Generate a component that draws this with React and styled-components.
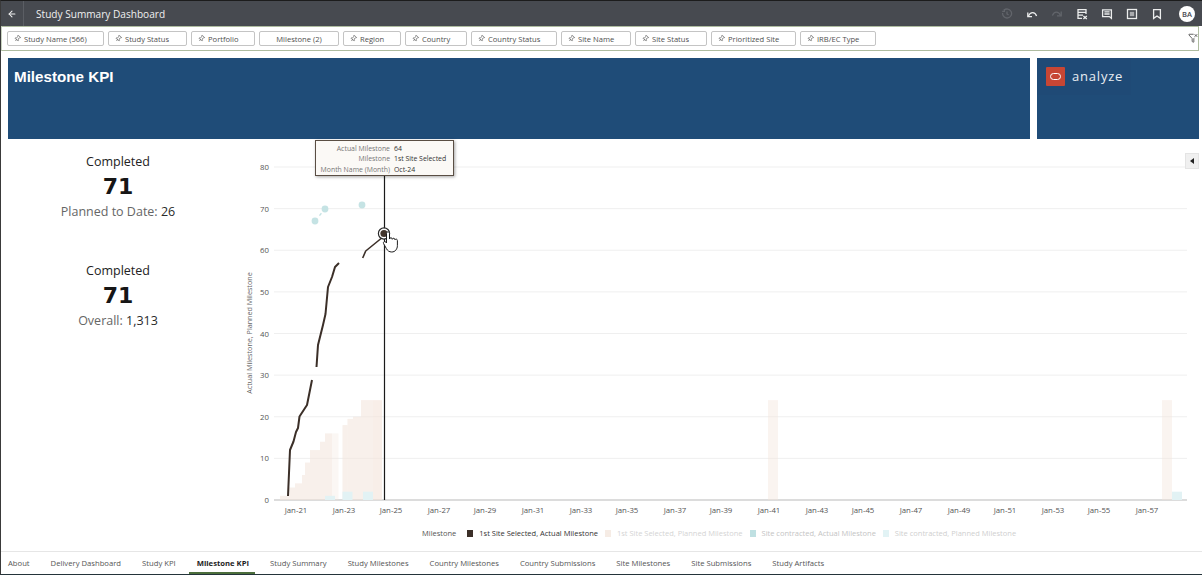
import React from "react";
import styled, { createGlobalStyle } from "styled-components";
import { ArrowLeft, Pin, FilterX } from "lucide-react";

const Global = createGlobalStyle`
  html, body { margin: 0; padding: 0; background: #fff; overflow: hidden; }
  * { box-sizing: border-box; }
  body { font-family: "Open Sans", "Noto Sans", sans-serif; }
`;

const Page = styled.div`
  width: 1202px; height: 575px; display: flex; flex-direction: column;
  border-top: 1px solid #1c1c1c; border-left: 1px solid #3a3a3a; border-bottom: 1px solid #24343a;
  overflow: hidden; position: relative;
`;
const Header = styled.header`
  height: 25px; flex: none; background: #474a50; display: flex; align-items: center; color: #fff;
`;
const BackCell = styled.div`
  width: 23px; height: 100%; display: flex; align-items: center; justify-content: center;
  border-right: 1px solid #5b5e64; color: #f2f2f2;
`;
const Title = styled.div`
  margin-left: 12px; font-size: 10.1px; color: #f0f0f0; flex: 1;
`;
const IconRow = styled.div`
  display: flex; align-items: center; gap: 13px; padding-right: 7px;
`;
const HeadIcon = styled.svg`
  width: 12px; height: 12px; display: block; fill: none; stroke: currentColor; stroke-width: 1.3;
  color: ${p => (p.$off ? "#62656b" : "#eceded")};
`;
const Avatar = styled.div`
  width: 16px; height: 16px; border-radius: 50%; background: #fff; color: #474a50;
  font-size: 7.5px; font-weight: 600; display: flex; align-items: center; justify-content: center; margin-left: 3px;
`;
const FilterBar = styled.div`
  height: 25px; flex: none; margin-right: 3px; border: 1px solid #aebca0; border-left-color: #c9d3c0;
  display: flex; align-items: center; gap: 4px; padding-left: 5px; position: relative; background: #fff;
`;
const Chip = styled.div`
  width: ${p => p.$w}px; height: 15px; border: 1px solid #c4c4c4; border-radius: 2px; flex: none;
  display: flex; align-items: center; justify-content: ${p => (p.$center ? "center" : "flex-start")};
  padding-left: ${p => (p.$center ? 0 : 6)}px; gap: 3px; font-size: 7.6px; color: #4f4f4f; white-space: nowrap;
`;
const ChipPin = styled(Pin)`
  transform: rotate(40deg); flex: none;
`;
const FilterIcon = styled.span`
  position: absolute; right: 0; top: 6px; color: #333; display: flex;
`;
const Banners = styled.div`
  display: flex; gap: 7px; padding: 7px 3px 0 7px; flex: none;
`;
const MainBanner = styled.div`
  flex: 1; height: 81px; background: #1f4c78; color: #fff; padding: 10px 6px;
  font-family: "Liberation Sans", Arial, sans-serif; font-weight: 700; font-size: 15.2px; line-height: 18px;
`;
const LogoBanner = styled.div`
  width: 162px; height: 81px; background: #1f4c78; flex: none;
`;
const LogoPlate = styled.div`
  width: 94px; height: 37px; background: #1f4a76; display: flex; align-items: flex-start; gap: 7px; padding: 9px 0 0 9px;
`;
const LogoMark = styled.div`
  width: 19px; height: 19px; background: #c74634; border-radius: 1px; display: flex; align-items: center; justify-content: center;
`;
const LogoRing = styled.div`
  width: 11px; height: 7px; border: 1.5px solid #fff; border-radius: 4px;
`;
const LogoText = styled.div`
  color: #e8edf2; font-size: 13px; letter-spacing: 0.8px; line-height: 19px;
`;
const Body = styled.div`
  flex: 1; min-height: 0; display: flex; position: relative;
`;
const Stats = styled.div`
  width: 239px; flex: none; display: flex; flex-direction: column; gap: 30px; padding-top: 14px;
`;
const Stat = styled.div`
  width: 234px; display: flex; flex-direction: column; align-items: center; height: 79px;
`;
const StatLabel = styled.div`
  font-size: 12.5px; line-height: 18px; color: #222;
`;
const StatValue = styled.div`
  font-family: "DejaVu Sans", sans-serif; font-weight: 700; font-size: 22px; line-height: 32px; color: #161616;
`;
const StatSub = styled.div`
  font-size: 12.5px; line-height: 18px; color: #666;
  b { font-weight: 400; color: #2a2a2a; }
`;
const ChartArea = styled.div`
  flex: 1; min-width: 0; position: relative; display: flex; flex-direction: column;
`;
const ChartSvg = styled.svg`
  display: block; flex: none;
  text { font-family: "Open Sans", "Noto Sans", sans-serif; }
`;
const Legend = styled.div`
  display: flex; align-items: center; height: 14px; margin-top: 5px; padding-left: 182px;
  font-size: 7.5px; white-space: nowrap;
`;
const LegendTitle = styled.span`
  color: #555; margin-right: 11px;
`;
const LegendItem = styled.span`
  display: flex; align-items: center; gap: 6px; margin-right: 7px; color: ${p => p.$color};
`;
const Swatch = styled.i`
  width: 6px; height: 7px; display: block; background: ${p => p.$color};
`;
const Tooltip = styled.div`
  position: absolute; left: 75px; top: 1px; width: 139px; height: 36px; background: #fbf9f6;
  border: 1px solid #5a4e44; box-shadow: 1px 1px 3px rgba(0,0,0,.35); padding: 3px 5px 0 0;
  display: grid; grid-template-columns: 74px auto; column-gap: 4px; font-size: 6.9px; line-height: 9.5px;
`;
const TipKey = styled.span`
  color: #777; text-align: right; white-space: nowrap;
`;
const TipVal = styled.span`
  color: #333; white-space: nowrap;
`;
const Collapse = styled.div`
  position: absolute; right: 3px; top: 14px; width: 14px; height: 16px; background: #f0f0f0;
  border: 1px solid #e4e4e4; display: flex; align-items: center; justify-content: center;
  &::before { content: ""; border: 3px solid transparent; border-right: 4px solid #222; border-left: 0; }
`;
const Tabs = styled.nav`
  height: 23px; flex: none; border-top: 1px solid #e6e6e6; display: flex; gap: 21px; padding-left: 7px;
`;
const Tab = styled.div`
  position: relative; font-size: 7.68px; line-height: 22px; color: ${p => (p.$active ? "#1d1d1d" : "#555")};
  font-weight: ${p => (p.$active ? 700 : 400)}; white-space: nowrap;
  ${p => p.$active && `&::after { content: ""; position: absolute; left: -8px; right: -6px; bottom: 0; height: 2px; background: #4c6e3c; }`}
`;

const yFor = v => 500 - v * 4.1625;
const ticksY = [0, 10, 20, 30, 40, 50, 60, 70, 80];
const ticksX = [["21",296],["23",344],["25",391],["27",439],["29",485],["31",533],["33",581],["35",627],["37",675],["39",721],["41",769],["43",817],["45",863],["47",911],["49",959],["51",1005],["53",1053],["55",1099],["57",1147]];

const planned = [
  [280, 288, 1, .8],[288, 295, 3, .8],[295, 302, 4, .8],[302, 305, 6, .8],[305, 310, 9, .8],[310, 320, 12, .8],[320, 325, 14, .8],[325, 332, 16, .8],[332, 338.5, 16, .45],
  [342.5, 347.5, 18, .8],[347.5, 353, 19.5, .8],[353, 361, 20, .8],[361, 373, 24, .8],[373, 382, 24, .9],
  [768, 778, 24, .6],[1162, 1172, 24, .6],
];
const contracted = [[325, 335, 1],[342.5, 352.5, 2],[363, 373, 2],[1172, 1182, 2]];
const line1 = "288,496 290,450 293.5,441.5 296,432 298,428 299.5,416.5 307,405 312,380";
const line2 = "316.5,367 318,345 323,325 325.5,314 328,287 332,277 335,267 339,263";
const line3 = "362.7,258 365.7,251 381.7,238 384,233";

const Chart = () => (
  <ChartSvg width="961" height="382" viewBox="240 139 961 382">
    {ticksY.map(v => (
      <g key={v}>
        <line x1="274" x2="1187" y1={yFor(v)} y2={yFor(v)} stroke={v === 0 ? "#b9b9b9" : "#efefef"} strokeWidth="1" />
        <text x="269" y={yFor(v) + 3} textAnchor="end" fontSize="7.8" fill="#555">{v}</text>
      </g>
    ))}
    {planned.map(([a, b, v, o], i) => (
      <rect key={i} x={a} y={yFor(v)} width={b - a} height={v * 4.1625} fill="#f3e4da" opacity={o * 0.68} />
    ))}
    {contracted.map(([a, b, v], i) => (
      <rect key={i} x={a} y={yFor(v)} width={b - a} height={v * 4.1625} fill="#e2f2f4" />
    ))}
    {ticksX.map(([t, x]) => (
      <text key={t} x={x} y="513" textAnchor="middle" fontSize="7.8" fill="#555">Jan-{t}</text>
    ))}
    <text transform="translate(252 333) rotate(-90)" textAnchor="middle" fontSize="7.2" fill="#666">Actual Milestone, Planned Milestone</text>
    <line x1="384.5" x2="384.5" y1="170" y2="500" stroke="#1a1a1a" strokeWidth="1.2" />
    <polyline points={line1} fill="none" stroke="#3b2f28" strokeWidth="2" strokeLinejoin="round" />
    <polyline points={line2} fill="none" stroke="#3b2f28" strokeWidth="2" strokeLinejoin="round" />
    <polyline points={line3} fill="none" stroke="#3b2f28" strokeWidth="1.6" strokeLinejoin="round" />
    <line x1="315" y1="221" x2="325" y2="209" stroke="#c5e3e4" strokeWidth="1.4" strokeDasharray="3 4" />
    <circle cx="315" cy="221" r="3.4" fill="#c5e3e4" />
    <circle cx="325" cy="209" r="3.4" fill="#c5e3e4" />
    <circle cx="362" cy="205" r="3.4" fill="#c5e3e4" />
    <circle cx="384" cy="233.5" r="5.6" fill="#fff" stroke="#2a2a2a" strokeWidth="1.2" />
    <circle cx="384" cy="233.5" r="3.6" fill="#43352c" />
    <path d="M386.5 233.5c0-2.2 3-2.2 3 0v5.5c.3-1.8 2.8-1.6 2.8.3.4-1.6 2.7-1.3 2.7.5.5-1.2 2.4-.9 2.4.8v5c0 3.6-2.4 6.4-5.6 6.4-2.7 0-4.2-1.3-5.4-3.4l-2.8-5c-.9-1.7 1.2-2.8 2.3-1.5l.6.9z" fill="#fff" stroke="#1c1c1c" strokeWidth="1" strokeLinejoin="round" />
  </ChartSvg>
);

const chips = [
  ["Study Name (566)", 97], ["Study Status", 79], ["Portfolio", 64], ["Milestone (2)", 80, true], ["Region", 58],
  ["Country", 62], ["Country Status", 86], ["Site Name", 70], ["Site Status", 72], ["Prioritized Site", 85], ["IRB/EC Type", 76],
];
const tabs = ["About", "Delivery Dashboard", "Study KPI", "Milestone KPI", "Study Summary", "Study Milestones", "Country Milestones", "Country Submissions", "Site Milestones", "Site Submissions", "Study Artifacts"];

const HistoryIcon = () => (
  <HeadIcon $off viewBox="0 0 12 12"><path d="M3 2.2A4.5 4.5 0 1 1 1.6 5" /><path d="M3.4 1v2.4H1.2" /><path d="M6 3.6V6l1.6 1" /></HeadIcon>
);
const UndoIcon = () => (
  <HeadIcon viewBox="0 0 12 12" strokeWidth="2"><path d="M1.8 4.4v4.2H6" /><path d="M2.4 8C4.4 3.4 9 3.4 10.6 8" /></HeadIcon>
);
const RedoIcon = () => (
  <HeadIcon $off viewBox="0 0 12 12"><path d="M10.2 3.6v4.2H6" /><path d="M9.6 7.4C7.6 3 3 3 1.4 7.6" /></HeadIcon>
);
const DataIcon = () => (
  <HeadIcon viewBox="0 0 12 12"><path d="M6 10.4H2V1.6h8V6" /><path d="M2 4.4h8M2 7.2h5" /><path d="M7.4 8l3.4 3M10.8 8l-3.4 3" /></HeadIcon>
);
const CommentIcon = () => (
  <HeadIcon viewBox="0 0 12 12"><path d="M1.6 1.8h8.8v8.6L8.4 8.6H1.6z" /><path d="M3.4 3.9h5.2M3.4 6h5.2" /></HeadIcon>
);
const PresentIcon = () => (
  <HeadIcon viewBox="0 0 12 12"><rect x="1.5" y="1.5" width="9" height="9" /><rect x="3.8" y="3.8" width="4.4" height="4.4" fill="#a9abae" stroke="none" /></HeadIcon>
);
const BookmarkIcon = () => (
  <HeadIcon viewBox="0 0 12 12" strokeWidth="1.5"><path d="M2.6 1.6h6.8v8.8L6 8 2.6 10.4z" /></HeadIcon>
);

export default function App() {
  return (
    <Page>
      <Global />
      <Header>
        <BackCell><ArrowLeft size={10} strokeWidth={2.5} /></BackCell>
        <Title>Study Summary Dashboard</Title>
        <IconRow>
          <HistoryIcon />
          <UndoIcon />
          <RedoIcon />
          <DataIcon />
          <CommentIcon />
          <PresentIcon />
          <BookmarkIcon />
          <Avatar>BA</Avatar>
        </IconRow>
      </Header>
      <FilterBar>
        {chips.map(([t, w, center]) => (
          <Chip key={t} $w={w} $center={center}>
            {!center && <ChipPin size={7} strokeWidth={2} />}
            {t}
          </Chip>
        ))}
        <FilterIcon><FilterX size={10} strokeWidth={1.8} /></FilterIcon>
      </FilterBar>
      <Banners>
        <MainBanner>Milestone KPI</MainBanner>
        <LogoBanner>
          <LogoPlate>
            <LogoMark><LogoRing /></LogoMark>
            <LogoText>analyze</LogoText>
          </LogoPlate>
        </LogoBanner>
      </Banners>
      <Body>
        <Stats>
          <Stat>
            <StatLabel>Completed</StatLabel>
            <StatValue>71</StatValue>
            <StatSub>Planned to Date: <b>26</b></StatSub>
          </Stat>
          <Stat>
            <StatLabel>Completed</StatLabel>
            <StatValue>71</StatValue>
            <StatSub>Overall: <b>1,313</b></StatSub>
          </Stat>
        </Stats>
        <ChartArea>
          <Chart />
          <Legend>
            <LegendTitle>Milestone</LegendTitle>
            <LegendItem $color="#333"><Swatch $color="#3b2f28" />1st Site Selected, Actual Milestone</LegendItem>
            <LegendItem $color="#d4d4d4"><Swatch $color="#f6ece5" />1st Site Selected, Planned Milestone</LegendItem>
            <LegendItem $color="#c4c4c4"><Swatch $color="#bfe0e2" />Site contracted, Actual Milestone</LegendItem>
            <LegendItem $color="#cfcfcf"><Swatch $color="#e2f3f5" />Site contracted, Planned Milestone</LegendItem>
          </Legend>
          <Tooltip>
            <TipKey>Actual Milestone</TipKey><TipVal>64</TipVal>
            <TipKey>Milestone</TipKey><TipVal>1st Site Selected</TipVal>
            <TipKey>Month Name (Month)</TipKey><TipVal>Oct-24</TipVal>
          </Tooltip>
          <Collapse />
        </ChartArea>
      </Body>
      <Tabs>
        {tabs.map(t => <Tab key={t} $active={t === "Milestone KPI"}>{t}</Tab>)}
      </Tabs>
    </Page>
  );
}
